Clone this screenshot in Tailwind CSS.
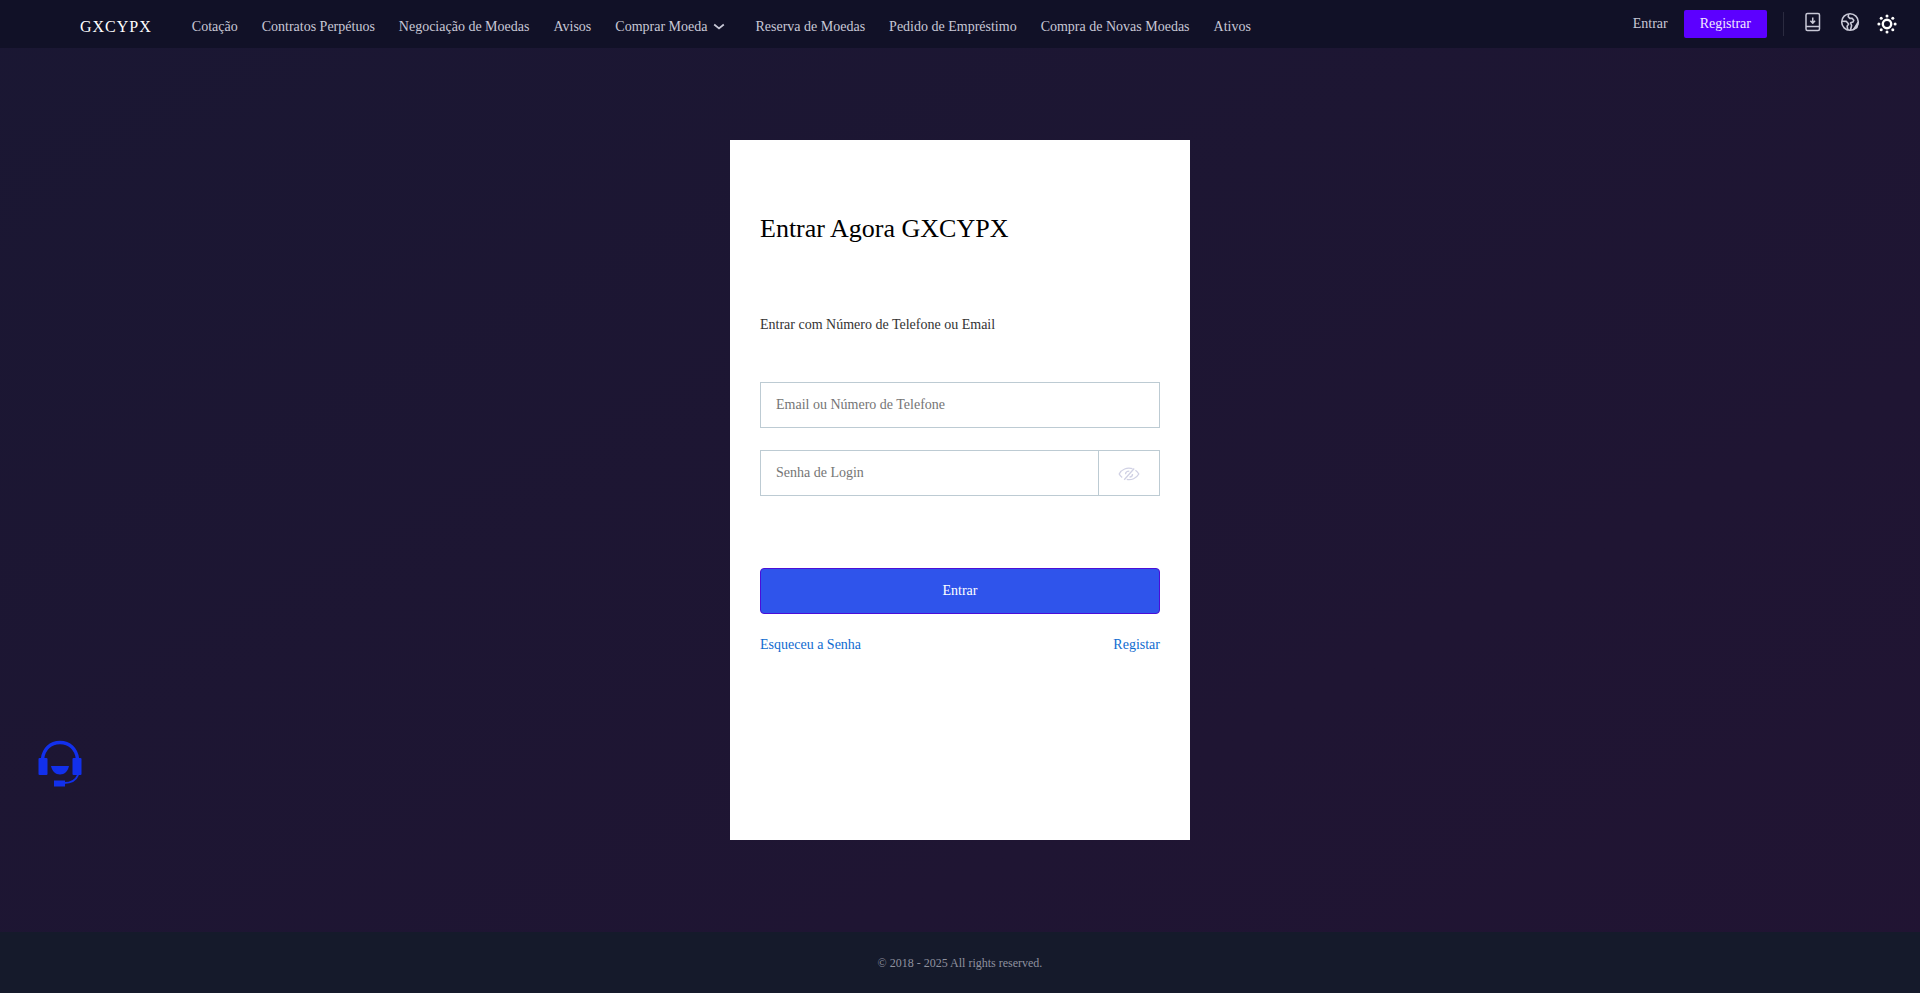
<!DOCTYPE html>
<html lang="pt">
<head>
<meta charset="utf-8">
<meta name="viewport" content="width=device-width, initial-scale=1">
<title>GXCYPX</title>
<script src="https://cdn.jsdelivr.net/npm/@tailwindcss/browser@4"></script>
</head>
<body class="flex min-h-screen flex-col bg-linear-to-br from-[#1a1733] to-[#211433] font-['Liberation_Serif',serif] text-sm">
<header class="flex h-12 items-center justify-between bg-[#111127] pr-[23px] pl-20 text-[#c8c8d6]">
  <div class="flex items-center gap-10 pt-1.5">
    <a href="#" class="text-base tracking-[1px] text-white">GXCYPX</a>
    <nav class="flex items-center gap-6 whitespace-nowrap">
      <a href="#">Cotação</a>
      <a href="#">Contratos Perpétuos</a>
      <a href="#">Negociação de Moedas</a>
      <a href="#">Avisos</a>
      <button type="button" class="mr-1.5 flex items-center gap-1.5">Comprar Moeda
        <svg class="size-3" viewBox="0 0 12 12" fill="none" stroke="currentColor" stroke-width="1.700" aria-hidden="true"><path d="M1.200 3.500l4.800 4 4.800-4"/></svg>
      </button>
      <a href="#">Reserva de Moedas</a>
      <a href="#">Pedido de Empréstimo</a>
      <a href="#">Compra de Novas Moedas</a>
      <a href="#">Ativos</a>
    </nav>
  </div>
  <div class="flex items-center gap-4">
    <a href="#">Entrar</a>
    <a href="#" class="flex h-7 items-center rounded-xs bg-[#5c00ff] px-4 text-[#f3eaff]">Registrar</a>
    <span class="h-6 w-px bg-[#2b2b40]"></span>
    <div class="flex items-center gap-[17px] pl-[3px]">
      <button type="button" aria-label="Baixar aplicativo" class="pb-1">
        <svg class="size-5" viewBox="0 0 20 20" fill="none" stroke="currentColor" stroke-width="1.500" stroke-linejoin="round" aria-hidden="true"><rect x="3" y="1.500" width="13.500" height="17" rx="1.500"/><path d="M3 14.500h13.500M9.750 5.500v5.500M7.400 8.800l2.350 2.300 2.350-2.300"/></svg>
      </button>
      <button type="button" aria-label="Idioma" class="pb-1">
        <svg class="size-5" viewBox="0 0 20 20" fill="none" stroke="currentColor" stroke-width="1.600" stroke-linejoin="round" aria-hidden="true"><circle cx="10" cy="10" r="8.300"/><path d="M2 9.200l4.400.2 2.200 2.600-1.500 2.200.7 4M8.600 2L8.200 4.600l1.600 1.800h2.400l1.600 1.800-.8 1.800-2.400.8 1 2.800-1.200 4.600"/><path d="M18 10.500l-4.200 6.600 3-1.500z" fill="currentColor"/></svg>
      </button>
      <button type="button" aria-label="Tema" class="text-white">
        <svg class="size-5" viewBox="0 0 20 20" fill="currentColor" aria-hidden="true"><circle cx="10" cy="10" r="4.200" fill="none" stroke="currentColor" stroke-width="2.400"/><circle cx="10" cy="1.900" r="1.500"/><circle cx="10" cy="18.100" r="1.500"/><circle cx="1.900" cy="10" r="1.500"/><circle cx="18.100" cy="10" r="1.500"/><circle cx="4.200" cy="4.200" r="1.500"/><circle cx="15.800" cy="4.200" r="1.500"/><circle cx="4.200" cy="15.800" r="1.500"/><circle cx="15.800" cy="15.800" r="1.500"/></svg>
      </button>
    </div>
  </div>
</header>

<main class="flex flex-1 items-start justify-center pt-[92px] pb-[92px]">
  <form class="w-full max-w-[460px] bg-white px-[30px] pt-[71px] pb-[184px]">
    <h1 class="text-[26px] leading-9 text-black">Entrar Agora GXCYPX</h1>
    <p class="mt-[68px] leading-5 text-[#333]">Entrar com Número de Telefone ou Email</p>
    <input type="text" aria-label="Email ou Número de Telefone" placeholder="Email ou Número de Telefone" class="mt-[47px] block h-[46px] w-full border border-[#bdcbd3] px-[15px] text-[#333] outline-none placeholder:text-[#757575]">
    <div class="mt-[22px] flex h-[46px] border border-[#bdcbd3]">
      <input type="password" aria-label="Senha de Login" placeholder="Senha de Login" class="min-w-0 flex-1 px-[15px] text-[#333] outline-none placeholder:text-[#757575]">
      <button type="button" aria-label="Mostrar senha" class="flex w-[61px] items-center justify-center border-l border-[#bdcbd3] pt-0.5 text-[#d0d1e4]">
        <svg class="h-3.5 w-[22px]" viewBox="0 0 22 14" fill="none" stroke="currentColor" stroke-width="1.300" aria-hidden="true"><path d="M14.500 1.700C9 .2 3.500 2.200 1.200 7c.8 1.600 1.700 2.600 3 3.500M17.400 3.300c1.400.9 2.500 2.100 3.400 3.700-2.300 4.300-7.500 6.500-12 5.400M16.200 1.500L6.200 12.800M11.300 4.200C9 4.200 7.600 5.300 7.500 7.300M14.500 7c.1 1.700-1.200 3-3 3.200"/></svg>
      </button>
    </div>
    <button type="submit" class="mt-[72px] block h-[46px] w-full rounded-sm border border-[#4a0ed8] bg-[#2f54eb] text-white">Entrar</button>
    <div class="mt-5 flex justify-between leading-[22px] text-[#0f6bd0]">
      <a href="#">Esqueceu a Senha</a>
      <a href="#">Registar</a>
    </div>
  </form>
</main>

<footer class="flex h-[61px] items-center justify-center bg-[#151a2b] text-xs text-[#8f919f]">© 2018 - 2025 All rights reserved.</footer>

<button type="button" aria-label="Atendimento" class="fixed bottom-[201px] left-[30px] text-[#1230ec]">
  <svg class="size-[60px]" viewBox="0 0 60 60" fill="currentColor" aria-hidden="true"><path d="M12.500 27c1-10 8-16.500 17.500-16.500S46.500 17 47.500 27" fill="none" stroke="currentColor" stroke-width="3.400"/><rect x="8.500" y="26" width="9" height="17" rx="1"/><rect x="42.500" y="26" width="9" height="17" rx="1"/><path d="M21 34h18c-1 5-4.500 8.500-9 8.500S22 39 21 34z"/><path d="M24 48.500h11v6H24z"/><path d="M34 51c8 0 12-3 14-8" fill="none" stroke="currentColor" stroke-width="2"/></svg>
</button>
</body>
</html>
